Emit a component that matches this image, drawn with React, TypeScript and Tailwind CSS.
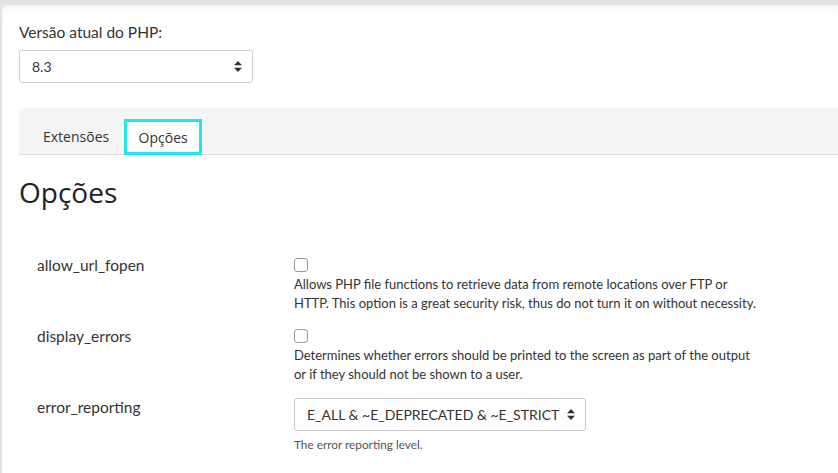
import React from "react";

function Arrows({ className = "" }: { className?: string }) {
  return (
    <svg width="8" height="11" viewBox="0 0 8 11" className={className}>
      <path d="M4 0 L8 4.2 H0 Z" fill="#333" />
      <path d="M4 11 L8 6.8 H0 Z" fill="#333" />
    </svg>
  );
}

function Row({
  label,
  children,
}: {
  label: string;
  children: React.ReactNode;
}) {
  return (
    <div className="flex">
      <div className="w-[275px] shrink-0 pl-[18px] text-[15.5px] leading-[20px] text-[#333]">
        {label}
      </div>
      <div className="w-[520px]">{children}</div>
    </div>
  );
}

function Checkbox() {
  return (
    <div className="w-[14px] h-[14px] border border-[#9a9a9a] rounded-[3px] bg-white" />
  );
}

export default function App() {
  const body = { fontFamily: "Lato, 'Noto Sans', sans-serif" };
  const sans = { fontFamily: "'Open Sans', sans-serif" };
  return (
    <div className="w-[838px] h-[473px] overflow-hidden bg-[#e2e2e2] pt-[5px] pl-[2px]" style={body}>
      <div className="h-full bg-white rounded-tl-[6px] shadow-[inset_0_10px_10px_-8px_rgba(0,0,0,0.07)] pl-[17px] pt-[17px]">
        <div className="text-[15.5px] leading-[20px] text-[#333]">Versão atual do PHP:</div>
        <div className="mt-[8px] w-[234px] h-[33px] border border-[#ccc] rounded-[3px] flex items-center justify-between pl-[12px] pr-[10px] text-[14px] text-[#333]">
          <span>8.3</span>
          <Arrows />
        </div>

        <div className="mt-[25px] h-[47px] bg-[#f5f5f5] rounded-tl-[5px] border-b border-[#dcdcdc] flex items-end pl-[24px] text-[14px] text-[#333]" style={sans}>
          <div className="h-[35px] flex items-center pr-[15px]">Extensões</div>
          <div className="h-[36px] w-[78px] -mb-px border-[3px] border-[#1ee8ee] bg-white flex items-center justify-center">
            Opções
          </div>
        </div>

        <div className="mt-[19px] text-[28px] leading-[36px] text-[#222]" style={sans}>Opções</div>

        <div className="mt-[45px] flex flex-col">
          <Row label="allow_url_fopen">
            <div className="pt-[3px]">
              <Checkbox />
            </div>
            <div className="mt-[3px] text-[13px] leading-[19px] text-[#333]">
              Allows PHP file functions to retrieve data from remote locations over FTP or
              <br />
              HTTP. This option is a great security risk, thus do not turn it on without necessity.
            </div>
          </Row>
          <div className="h-[13px]" />
          <Row label="display_errors">
            <div className="pt-[3px]">
              <Checkbox />
            </div>
            <div className="mt-[3px] text-[13px] leading-[19px] text-[#333]">
              Determines whether errors should be printed to the screen as part of the output
              <br />
              or if they should not be shown to a user.
            </div>
          </Row>
          <div className="h-[13px]" />
          <Row label="error_reporting">
            <div className="mt-[1px] w-[292px] h-[33px] border border-[#ccc] rounded-[3px] flex items-center justify-between pl-[12px] pr-[10px] text-[14px] text-[#333]">
              <span>E_ALL &amp; ~E_DEPRECATED &amp; ~E_STRICT</span>
              <Arrows />
            </div>
            <div className="mt-[6px] text-[11.8px] leading-[16px] text-[#555]">The error reporting level.</div>
          </Row>
        </div>
      </div>
    </div>
  );
}
